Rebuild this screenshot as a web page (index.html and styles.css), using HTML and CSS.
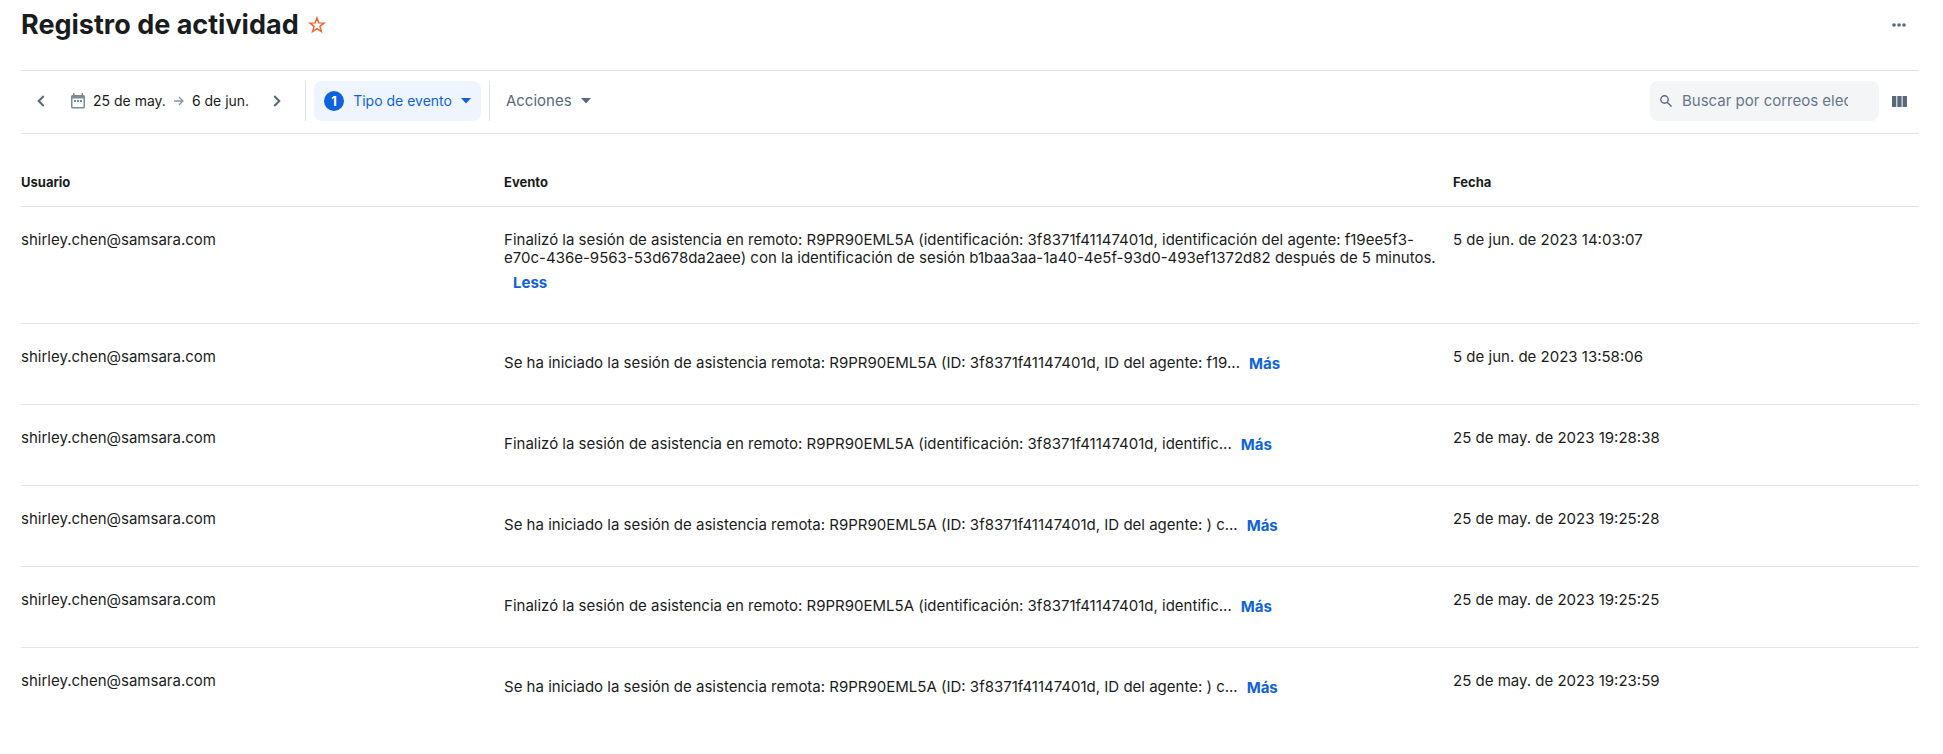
FILE: index.html
```html
<!DOCTYPE html>
<html lang="es">
<head>
  <meta charset="UTF-8">
  <meta name="viewport" content="width=device-width, initial-scale=1.0">
  <title>Registro de actividad</title>
  <link rel="stylesheet" href="styles.css">
</head>
<body>
  <!-- Header -->
  <header class="page-header">
    <h1 class="page-title">Registro de actividad</h1>
    <button type="button" class="icon-button star-button" aria-label="Favorito">
      <svg width="18" height="18" viewBox="0 0 16 16" fill="none" stroke="#f0642d" stroke-width="1.3">
        <path d="M8 1.8l1.600 4.300 4.700.2-3.700 2.900 1.300 4.600L8 11.200l-3.900 2.600 1.300-4.600-3.700-2.900 4.700-.2z"/>
      </svg>
    </button>
    <button type="button" class="icon-button more-button" aria-label="Más opciones">
      <svg width="14" height="4" viewBox="0 0 14 4" fill="#59687a">
        <circle cx="2" cy="2" r="1.8"/>
        <circle cx="7" cy="2" r="1.8"/>
        <circle cx="12" cy="2" r="1.8"/>
      </svg>
    </button>
  </header>

  <!-- Toolbar -->
  <div class="toolbar">
    <div class="date-nav">
      <button type="button" class="icon-button" aria-label="Periodo anterior">
        <svg width="8" height="12" viewBox="0 0 8 12" fill="none" stroke="#59687a" stroke-width="2">
          <path d="M6.700 1L1.700 6l5 5"/>
        </svg>
      </button>
      <button type="button" class="date-range">
        <svg width="14" height="16" viewBox="0 0 14 16">
          <path fill="#7d8a9c" fill-rule="evenodd" d="M2 0h1.500v2h7V0H12v2h.5A1.500 1.500 0 0 1 14 3.500v10.500a1.500 1.500 0 0 1-1.500 1.500h-11A1.500 1.500 0 0 1 0 14V3.500A1.500 1.500 0 0 1 1.500 2H2zM1.500 5.500v8.500h11V5.500z"/>
          <path fill="#7d8a9c" d="M3 7h2v2H3zM6 7h2v2H6zM9 7h2v2H9z"/>
        </svg>
        <span class="date-text">25 de may.</span>
        <svg width="10" height="10" viewBox="0 0 10 10" fill="none" stroke="#8a96a6" stroke-width="1.3">
          <path d="M0 5h9M5 1l4 4-4 4"/>
        </svg>
        <span class="date-text">6 de jun.</span>
      </button>
      <button type="button" class="icon-button" aria-label="Periodo siguiente">
        <svg width="8" height="12" viewBox="0 0 8 12" fill="none" stroke="#59687a" stroke-width="2">
          <path d="M1.300 1l5 5-5 5"/>
        </svg>
      </button>
    </div>
    <div class="filter-group">
      <button type="button" class="filter-button">
        <span class="filter-count">1</span>
        Tipo de evento
        <svg width="10" height="6" viewBox="0 0 10 6" fill="currentColor"><path d="M0 0h10L5 5.500z"/></svg>
      </button>
    </div>
    <button type="button" class="actions-button">
      Acciones
      <svg width="10" height="6" viewBox="0 0 10 6" fill="currentColor"><path d="M0 0h10L5 5.500z"/></svg>
    </button>
    <div class="search-box">
      <svg width="12" height="12" viewBox="0 0 12 12" fill="none" stroke="#59687a" stroke-width="1.400">
        <circle cx="4.500" cy="4.500" r="3.700"/>
        <path d="M7.200 7.200l4.300 4.300"/>
      </svg>
      <input type="text" class="search-input" placeholder="Buscar por correos electrónicos" aria-label="Buscar por correos electrónicos">
    </div>
    <button type="button" class="icon-button columns-button" aria-label="Columnas">
      <svg width="15" height="11" viewBox="0 0 15 11" fill="#59687a">
        <path d="M0 0h4.300v11H0zM5.300 0h4.300v11H5.300zM10.600 0H15v11h-4.400z"/>
      </svg>
    </button>
  </div>

  <!-- Activity table -->
  <table class="activity-table">
    <thead>
      <tr>
        <th class="col-user">Usuario</th>
        <th class="col-event">Evento</th>
        <th class="col-date">Fecha</th>
      </tr>
    </thead>
    <tbody>
      <tr>
        <td>shirley.chen@samsara.com</td>
        <td>Finalizó la sesión de asistencia en remoto: R9PR90EML5A (identificación: 3f8371f41147401d, identificación del agente: f19ee5f3-e70c-436e-9563-53d678da2aee) con la identificación de sesión b1baa3aa-1a40-4e5f-93d0-493ef1372d82 después de 5 minutos. <button type="button" class="toggle-text">Less</button></td>
        <td>5 de jun. de 2023 14:03:07</td>
      </tr>
      <tr>
        <td>shirley.chen@samsara.com</td>
        <td>Se ha iniciado la sesión de asistencia remota: R9PR90EML5A (ID: 3f8371f41147401d, ID del agente: f19...<button type="button" class="toggle-text">Más</button></td>
        <td>5 de jun. de 2023 13:58:06</td>
      </tr>
      <tr>
        <td>shirley.chen@samsara.com</td>
        <td>Finalizó la sesión de asistencia en remoto: R9PR90EML5A (identificación: 3f8371f41147401d, identific...<button type="button" class="toggle-text">Más</button></td>
        <td>25 de may. de 2023 19:28:38</td>
      </tr>
      <tr>
        <td>shirley.chen@samsara.com</td>
        <td>Se ha iniciado la sesión de asistencia remota: R9PR90EML5A (ID: 3f8371f41147401d, ID del agente: ) c...<button type="button" class="toggle-text">Más</button></td>
        <td>25 de may. de 2023 19:25:28</td>
      </tr>
      <tr>
        <td>shirley.chen@samsara.com</td>
        <td>Finalizó la sesión de asistencia en remoto: R9PR90EML5A (identificación: 3f8371f41147401d, identific...<button type="button" class="toggle-text">Más</button></td>
        <td>25 de may. de 2023 19:25:25</td>
      </tr>
      <tr>
        <td>shirley.chen@samsara.com</td>
        <td>Se ha iniciado la sesión de asistencia remota: R9PR90EML5A (ID: 3f8371f41147401d, ID del agente: ) c...<button type="button" class="toggle-text">Más</button></td>
        <td>25 de may. de 2023 19:23:59</td>
      </tr>
    </tbody>
  </table>
</body>
</html>
```

FILE: styles.css
```css
* {
  margin: 0;
  padding: 0;
  box-sizing: border-box;
}

body {
  background-color: white;
  color: #1a1d20;
  font-family: Inter, "Liberation Sans", sans-serif;
  font-size: 15px;
  line-height: 18px;
  padding: 0 24px 0 21px;
}

button,
input {
  font: inherit;
  color: inherit;
  border: none;
  background: none;
}

button {
  cursor: pointer;
}

svg {
  display: block;
  flex-shrink: 0;
}

.icon-button {
  display: flex;
  align-items: center;
  justify-content: center;
  width: 40px;
  height: 40px;
}

/* Header */
.page-header {
  display: flex;
  align-items: center;
  height: 70px;
  padding-bottom: 20px;
}

.page-title {
  font-size: 27px;
  line-height: 32px;
  font-weight: 700;
}

.star-button {
  width: 36px;
}

.more-button {
  margin-left: auto;
}

/* Toolbar */
.toolbar {
  display: flex;
  align-items: center;
  height: 64px;
  padding-bottom: 2px;
  border-top: 1px solid #e3e4e9;
  border-bottom: 1px solid #e3e4e9;
}

.date-nav {
  display: flex;
  align-items: center;
}

.date-range {
  display: flex;
  align-items: center;
  gap: 8px;
  height: 40px;
  padding: 0 8px 0 10px;
  font-size: 14px;
}

.filter-group {
  margin: 0 16px 0 8px;
  padding: 0 8px;
  border-left: 1px solid #dfe2e8;
  border-right: 1px solid #dfe2e8;
}

.filter-button {
  display: flex;
  align-items: center;
  gap: 9px;
  height: 40px;
  padding: 0 10px;
  border-radius: 8px;
  background-color: #eff5ff;
  color: #0f62dc;
  font-size: 14px;
}

.filter-count {
  width: 20px;
  height: 20px;
  border-radius: 50%;
  background-color: #0f62dc;
  color: white;
  font-size: 13px;
  line-height: 20px;
  font-weight: 700;
}

.actions-button {
  display: flex;
  align-items: center;
  gap: 9px;
  height: 40px;
  color: #59687a;
}

.search-box {
  display: flex;
  align-items: center;
  gap: 10px;
  width: 229px;
  height: 40px;
  margin-left: auto;
  padding: 0 31px 0 10px;
  border-radius: 8px;
  background-color: #f4f5f7;
}

.search-input {
  flex: 1;
  min-width: 0;
  outline: none;
}

.search-input::placeholder {
  color: #68778a;
  opacity: 1;
}

/* Activity table */
.activity-table {
  width: 100%;
  margin-top: 32px;
  border-collapse: separate;
  border-spacing: 0;
  table-layout: fixed;
}

.activity-table th {
  height: 41px;
  padding-bottom: 8px;
  border-bottom: 1px solid #e3e4e9;
  font-size: 13px;
  font-weight: 700;
  text-align: left;
}

.activity-table td {
  padding: 24px 16px 24px 0;
  border-bottom: 1px solid #e3e4e9;
  vertical-align: top;
}

.activity-table tbody tr:last-child td {
  border-bottom: none;
}

.col-user {
  width: 25.45%;
}

.col-event {
  width: 50%;
}

.toggle-text {
  height: 32px;
  padding: 0 9px;
  color: #0f62dc;
  font-weight: 700;
  vertical-align: middle;
}
```
